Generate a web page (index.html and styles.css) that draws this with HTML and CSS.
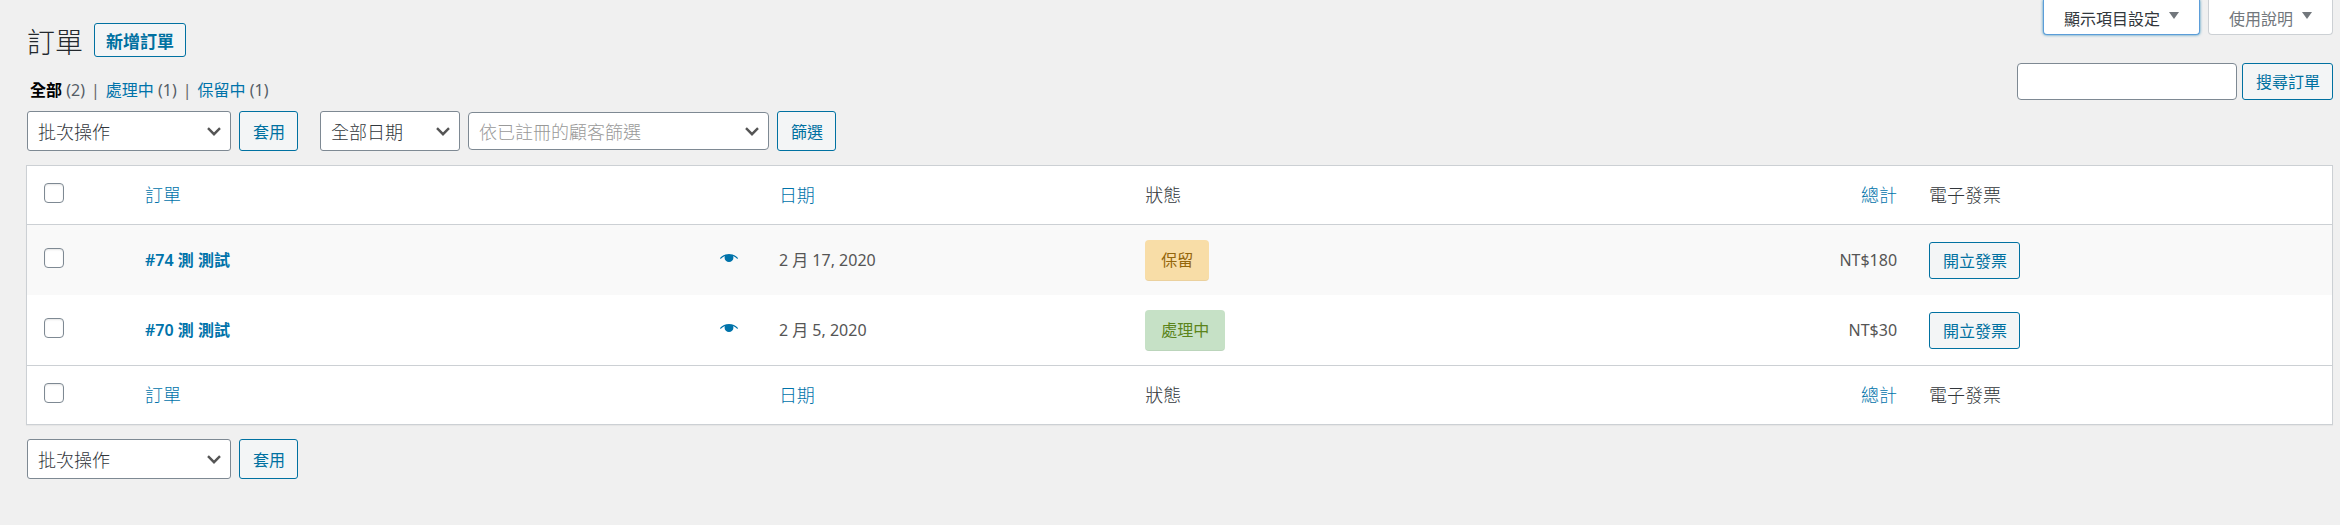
FILE: index.html
```
<!DOCTYPE html>
<html lang="zh-Hant-TW">
<head>
    <meta charset="UTF-8">
    <meta name="viewport" content="width=device-width, initial-scale=1.0">
    <title>訂單</title>
    <link rel="stylesheet" href="styles.css">
</head>
<body>
    <header class="page-header">
        <div class="header-main">
            <div class="title-row">
                <h1>訂單</h1>
                <a href="#" class="button page-title-action">新增訂單</a>
            </div>
            <ul class="subsubsub">
                <li><a href="#" class="current">全部</a> <span class="count">(2)</span></li>
                <li class="sep">|</li>
                <li><a href="#">處理中</a> <span class="count">(1)</span></li>
                <li class="sep">|</li>
                <li><a href="#">保留中</a> <span class="count">(1)</span></li>
            </ul>
        </div>
        <div class="header-side">
            <div class="screen-meta">
                <button type="button" class="show-settings focused">顯示項目設定 <span class="arrow"></span></button>
                <button type="button" class="show-settings">使用說明 <span class="arrow"></span></button>
            </div>
            <form class="search-box">
                <input type="search" class="search-input" aria-label="搜尋訂單">
                <button type="button" class="button">搜尋訂單</button>
            </form>
        </div>
    </header>

    <main>
        <div class="tablenav top">
            <div class="actions">
                <select class="bulk" aria-label="批次操作">
                    <option>批次操作</option>
                </select>
                <button type="button" class="button tall">套用</button>
            </div>
            <div class="actions filters">
                <select class="dates" aria-label="全部日期">
                    <option>全部日期</option>
                </select>
                <select class="customer" aria-label="依已註冊的顧客篩選">
                    <option>依已註冊的顧客篩選</option>
                </select>
                <button type="button" class="button tall">篩選</button>
            </div>
        </div>

        <table class="orders">
            <colgroup>
                <col class="col-check">
                <col class="col-order">
                <col class="col-date">
                <col class="col-status">
                <col class="col-total">
                <col class="col-invoice">
            </colgroup>
            <thead>
                <tr>
                    <td class="check"><input type="checkbox" aria-label="全選"></td>
                    <th scope="col"><a href="#">訂單</a></th>
                    <th scope="col"><a href="#">日期</a></th>
                    <th scope="col">狀態</th>
                    <th scope="col" class="total"><a href="#">總計</a></th>
                    <th scope="col">電子發票</th>
                </tr>
            </thead>
            <tbody>
                <tr>
                    <td class="check"><input type="checkbox" aria-label="選取 #74"></td>
                    <td>
                        <div class="order-cell">
                            <a href="#" class="order-view">#74 測 測試</a>
                            <a href="#" class="preview" aria-label="預覽">
                                <svg width="18" height="9" viewBox="0 0 18 9">
                                    <path d="M0 4C2.400 1.400 5.400 0 9 0s6.600 1.400 9 4l-.6.900c-1.400-1.300-2.800-2.200-4.300-2.800.2.500.3 1 .3 1.600a4.400 4.400 0 0 1-8.800 0c0-.6.1-1.100.3-1.600C3.400 2.700 2 3.600.6 4.900z"/>
                                </svg>
                            </a>
                        </div>
                    </td>
                    <td>2 月 17, 2020</td>
                    <td><mark class="status on-hold">保留</mark></td>
                    <td class="total">NT$180</td>
                    <td><button type="button" class="button">開立發票</button></td>
                </tr>
                <tr>
                    <td class="check"><input type="checkbox" aria-label="選取 #70"></td>
                    <td>
                        <div class="order-cell">
                            <a href="#" class="order-view">#70 測 測試</a>
                            <a href="#" class="preview" aria-label="預覽">
                                <svg width="18" height="9" viewBox="0 0 18 9">
                                    <path d="M0 4C2.400 1.400 5.400 0 9 0s6.600 1.400 9 4l-.6.900c-1.400-1.300-2.800-2.200-4.300-2.800.2.500.3 1 .3 1.600a4.400 4.400 0 0 1-8.800 0c0-.6.1-1.100.3-1.600C3.400 2.700 2 3.600.6 4.900z"/>
                                </svg>
                            </a>
                        </div>
                    </td>
                    <td>2 月 5, 2020</td>
                    <td><mark class="status processing">處理中</mark></td>
                    <td class="total">NT$30</td>
                    <td><button type="button" class="button">開立發票</button></td>
                </tr>
            </tbody>
            <tfoot>
                <tr>
                    <td class="check"><input type="checkbox" aria-label="全選"></td>
                    <th scope="col"><a href="#">訂單</a></th>
                    <th scope="col"><a href="#">日期</a></th>
                    <th scope="col">狀態</th>
                    <th scope="col" class="total"><a href="#">總計</a></th>
                    <th scope="col">電子發票</th>
                </tr>
            </tfoot>
        </table>

        <div class="tablenav bottom">
            <div class="actions">
                <select class="bulk" aria-label="批次操作">
                    <option>批次操作</option>
                </select>
                <button type="button" class="button tall">套用</button>
            </div>
        </div>
    </main>
</body>
</html>
```
FILE: styles.css
```
* {
    box-sizing: border-box;
}
body {
    margin: 0;
    padding: 0 7px 0 26px;
    background-color: #f0f0f0;
    color: #444;
    font-family: "Noto Sans", "Noto Sans CJK TC", sans-serif;
    font-size: 16px;
    line-height: 22px;
}
a {
    color: #0073aa;
    text-decoration: none;
}
a:hover {
    color: #006799;
}
button, input, select {
    font-family: inherit;
    margin: 0;
}

/* buttons */
.button {
    display: inline-block;
    height: 37px;
    padding: 2px 12px 0 13px;
    border: 1px solid #0071a1;
    border-radius: 3px;
    background-color: #f3f5f6;
    color: #0071a1;
    font-size: 16px;
    line-height: 33px;
    white-space: nowrap;
    cursor: pointer;
}
.button:hover {
    background-color: #f1f1f1;
}
.button.tall {
    height: 40px;
}

/* header */
.page-header {
    display: flex;
    justify-content: space-between;
}
.header-main {
    padding-top: 23px;
}
.title-row {
    display: flex;
    gap: 11px;
}
h1 {
    margin: 0;
    padding-left: 1px;
    color: #23282d;
    font-size: 28px;
    font-weight: 300;
    line-height: 38px;
}
.page-title-action {
    height: 34px;
    padding: 2px 11px 0;
    font-size: 17px;
    font-weight: 600;
    line-height: 32px;
}
.subsubsub {
    display: flex;
    gap: 6px;
    margin: 18px 0 0;
    padding: 0 0 0 4px;
    list-style: none;
}
.subsubsub .current {
    color: #000;
    font-weight: 600;
}
.count {
    color: #555d66;
}
.sep {
    color: #666;
}

/* screen options and help tabs */
.screen-meta {
    display: flex;
    justify-content: flex-end;
    gap: 8px;
}
.show-settings {
    display: flex;
    align-items: center;
    gap: 9px;
    height: 35px;
    padding: 1px 20px 0;
    border: 1px solid #ccd0d4;
    border-top: none;
    border-radius: 0 0 4px 4px;
    background-color: #fff;
    color: #72777c;
    font-size: 16px;
    cursor: pointer;
}
.show-settings.focused {
    border-color: #5b9dd9;
    color: #32373c;
    box-shadow: 0 0 3px rgba(0, 115, 170, 0.8);
}
.arrow {
    margin-bottom: 4px;
    border: 5px solid transparent;
    border-top: 7px solid #72777c;
    border-bottom: none;
}
.search-box {
    display: flex;
    justify-content: flex-end;
    gap: 5px;
    margin-top: 28px;
}
.search-input {
    width: 220px;
    height: 37px;
    padding: 0 8px;
    border: 1px solid #7e8993;
    border-radius: 4px;
    background-color: #fff;
    font-size: 16px;
}

/* filters above and below the table */
.tablenav {
    display: flex;
    gap: 22px;
    padding-left: 1px;
}
.tablenav.top {
    margin: 10px 0 14px;
}
.tablenav.bottom {
    margin: 14px 0;
}
.actions {
    display: flex;
    align-items: center;
    gap: 8px;
}
select {
    appearance: none;
    height: 40px;
    padding: 2px 32px 0 10px;
    border: 1px solid #7e8993;
    border-radius: 3px;
    background: #fff url('data:image/svg+xml;utf8,<svg xmlns="http://www.w3.org/2000/svg" width="14" height="9" viewBox="0 0 14 9"><path d="M1 1.200l6 6 6-6" fill="none" stroke="%23555" stroke-width="2.400"/></svg>') no-repeat right 9px center;
    color: #32373c;
    font-size: 18px;
    font-weight: 300;
    cursor: pointer;
}
.bulk {
    width: 204px;
}
.dates {
    width: 140px;
}
.customer {
    width: 301px;
    height: 38px;
    border-radius: 4px;
    color: #999;
}

/* orders table */
.orders {
    width: 100%;
    table-layout: fixed;
    border: 1px solid #ccd0d4;
    border-spacing: 0;
    background-color: #fff;
    box-shadow: 0 1px 1px rgba(0, 0, 0, 0.04);
}
.col-check {
    width: 102px;
}
.col-order {
    width: 27.5%;
}
.col-date, .col-status {
    width: 15.9%;
}
.col-total {
    width: 18.1%;
}
.orders th, .orders td {
    padding: 0 16px;
    text-align: left;
    vertical-align: middle;
}
.orders th {
    color: #32373c;
    font-size: 18px;
    font-weight: 300;
}
.orders thead tr, .orders tfoot tr {
    height: 59px;
}
.orders thead th, .orders thead td {
    border-bottom: 1px solid #ccd0d4;
}
.orders tfoot th, .orders tfoot td {
    border-top: 1px solid #ccd0d4;
}
.orders tbody tr {
    height: 70px;
}
.orders tbody tr:nth-child(odd) {
    background-color: #f9f9f9;
}
.orders tbody td {
    color: #555;
    font-size: 16px;
}
.orders .total {
    text-align: right;
}
.orders .check {
    padding: 0 0 4px 17px;
}
.check input {
    display: block;
    appearance: none;
    width: 20px;
    height: 20px;
    border: 1px solid #7e8993;
    border-radius: 4px;
    background-color: #fff;
    box-shadow: inset 0 1px 2px rgba(0, 0, 0, 0.1);
}
.order-cell {
    display: flex;
    align-items: center;
    justify-content: space-between;
}
.order-view {
    font-weight: 600;
}
.preview {
    margin-right: 9px;
    padding-bottom: 4px;
}
.preview svg {
    display: block;
    fill: #0073aa;
}
.status {
    display: inline-block;
    padding: 0 16px;
    border-bottom: 1px solid rgba(0, 0, 0, 0.05);
    border-radius: 4px;
    font-size: 16px;
    line-height: 40px;
    vertical-align: middle;
}
.on-hold {
    background-color: #f8dda7;
    color: #94660c;
}
.processing {
    background-color: #c6e1c6;
    color: #5b841b;
}
```
